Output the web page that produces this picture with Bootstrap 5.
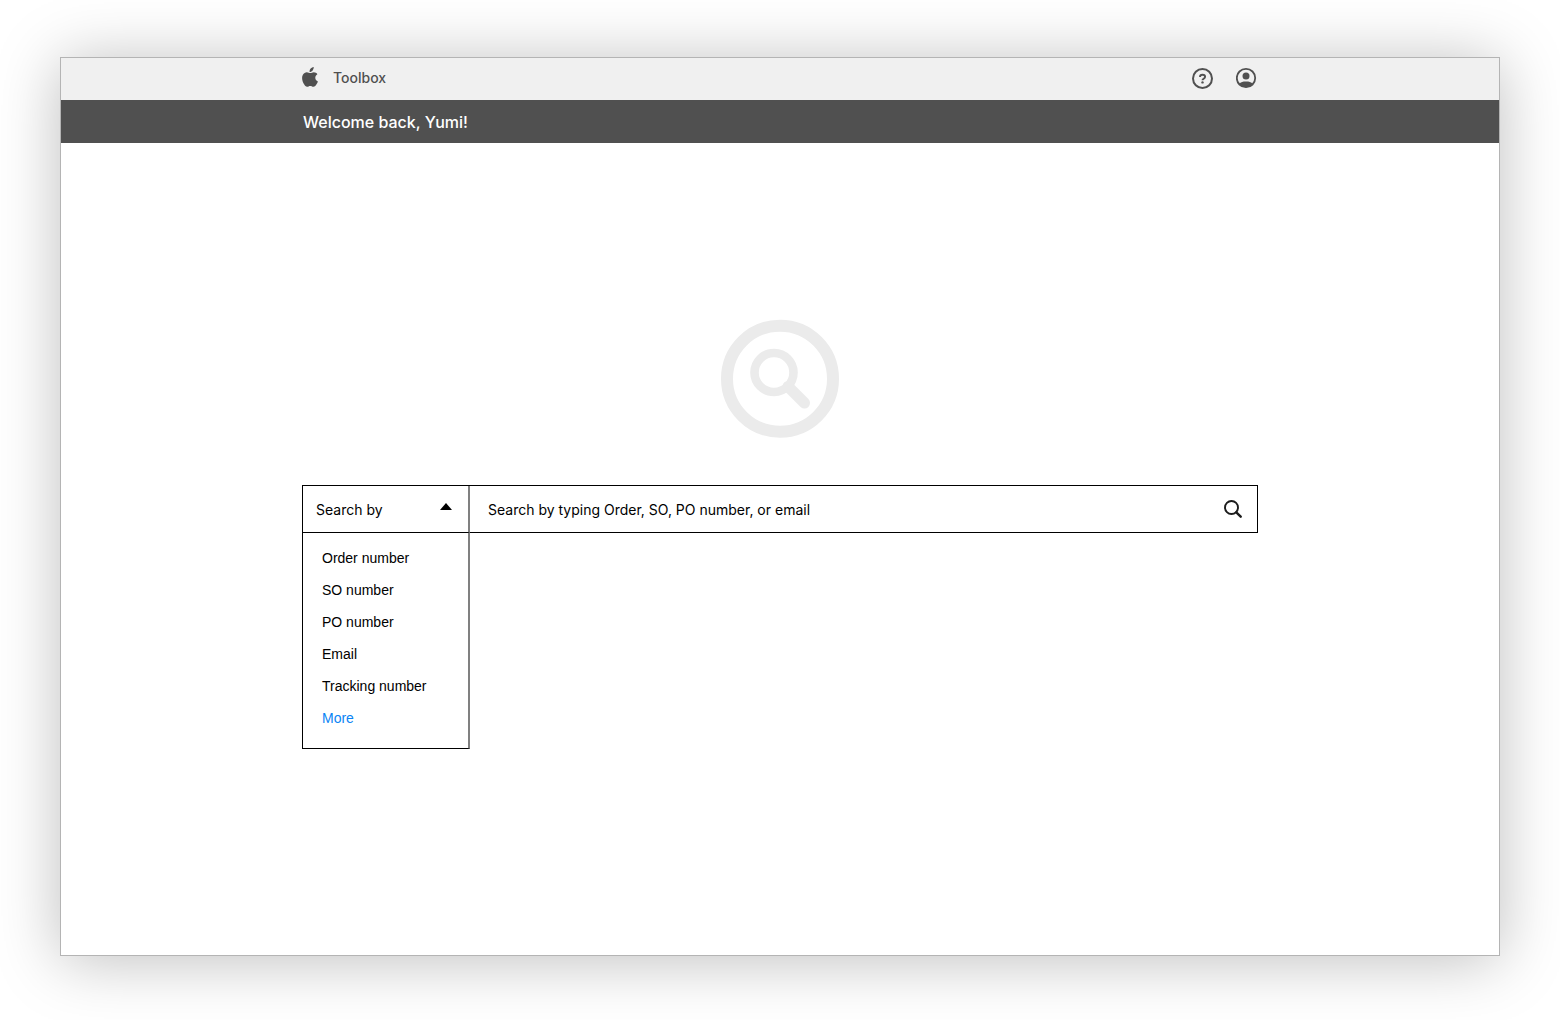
<!DOCTYPE html>
<html lang="en">
<head>
<meta charset="utf-8">
<meta name="viewport" content="width=device-width, initial-scale=1">
<title>Toolbox</title>
<link href="https://cdn.jsdelivr.net/npm/bootstrap@5.3.0/dist/css/bootstrap.min.css" rel="stylesheet">
<style>
  body { font-family: Inter, "Liberation Sans", sans-serif; background: #fff; color: #000; padding: 57px 60px 64px; }
  .app-window { min-height: calc(100vh - 121px); border: 1px solid #b4b4b4; background: #fff; box-shadow: 0 4px 60px rgba(0,0,0,.26); }
  .content-width { width: 100%; max-width: 956px; margin: 0 auto; }
  .top-bar { background: #f0f0f0; color: #505050; height: 42px; padding-bottom: 2px; }
  .top-bar .navbar-brand { color: #505050; font-size: 14px; font-weight: 500; line-height: 20px; gap: 15px; }
  .top-bar .navbar-brand svg { margin-bottom: 2px; }
  .icon-button { color: #505050; line-height: 0; }
  .welcome-bar { background: #505050; color: #fff; height: 43px; }
  .welcome-bar h1 { font-size: 16px; line-height: 24px; font-weight: 500; padding-left: 1px; }
  .search-page { padding-top: 176px; }
  .search-art { margin-bottom: 46px; }
  .search-bar { height: 48px; border: 1px solid #000; }
  .search-type { width: 167px; border-right: 2px solid #808080; }
  .search-type > .btn { font-size: 14px; color: #000; padding: 0 16px 0 13px; }
  .search-type > .btn:hover, .search-type > .btn.show { color: #000; border-color: transparent; }
  .search-type .dropdown-menu { --bs-dropdown-font-size: 14px; --bs-dropdown-color: #000; top: 100%; left: -1px; width: 168px; min-width: 0; margin: 0; padding: 9px 0 14px; border: 1px solid #000; border-right: 2px solid #808080; border-radius: 0; font-family: "Liberation Sans", Arial, sans-serif; }
  .search-type .dropdown-item { color: #000; line-height: 20px; padding: 6px 19px; }
  .search-type .more-item { color: #0a84f5; }
  .search-bar .form-control { font-size: 14px; color: #000; padding: 0 18px; }
  .search-bar .form-control::placeholder { color: #000; opacity: 1; }
  .search-submit { padding: 0 15px 0 13px; color: #1c1c1c; line-height: 0; }
</style>
<script src="https://cdn.jsdelivr.net/npm/bootstrap@5.3.0/dist/js/bootstrap.bundle.min.js" defer></script>
</head>
<body>
<div class="app-window">
  <header class="top-bar d-flex">
    <nav class="content-width d-flex align-items-center justify-content-between" aria-label="Main">
      <a class="navbar-brand d-flex align-items-center m-0 p-0" href="#">
        <svg width="16" height="21" viewBox="0 0 16 21" fill="currentColor" aria-hidden="true"><path d="M11.700 0c.2 1.300-.3 2.500-1.100 3.400C9.800 4.400 8.700 5 7.600 4.900 7.400 3.600 8 2.400 8.700 1.600 9.500.7 10.700.1 11.700 0ZM15.400 7.200c-1.300.8-2.100 2-2.100 3.500 0 1.700 1 3.100 2.600 3.700-.3 1-.8 2-1.400 2.900-.8 1.200-1.700 2.500-3 2.500-1.300 0-1.700-.8-3.200-.8s-1.900.8-3.200.8c-1.300 0-2.200-1.300-3-2.500C.5 14.900-.8 10.600.9 7.700c.9-1.500 2.400-2.400 4-2.400 1.400 0 2.300.8 3.500.8 1.100 0 1.800-.8 3.500-.8 1.400 0 2.700.7 3.500 1.900Z"/></svg>
        <span>Toolbox</span>
      </a>
      <div class="d-flex align-items-center">
        <button type="button" class="btn icon-button border-0 p-0 me-4" aria-label="Help">
          <svg width="20" height="22" viewBox="0 0 20 22" fill="none" stroke="currentColor" stroke-width="2" overflow="visible"><circle cx="10.500" cy="11.500" r="9.500"/><path d="M8 10c0-1.500 1-2.300 2.500-2.300s2.600.8 2.600 2.100c0 1-.6 1.400-1.400 1.900-.8.5-1.200.8-1.200 1.600" stroke-width="1.900"/><circle cx="10.500" cy="15.400" r="1.200" fill="currentColor" stroke="none"/></svg>
        </button>
        <button type="button" class="btn icon-button border-0 p-0" aria-label="Account">
          <svg width="22" height="22" viewBox="0 0 22 22"><circle cx="10" cy="11" r="9.200" fill="none" stroke="currentColor" stroke-width="1.800"/><circle cx="10" cy="9" r="3.500" fill="currentColor"/><path d="M3.200 16.500c1.600-1.500 3.800-2.100 6.800-2.100s5.200.6 6.800 2.100C15 19 12.500 20.300 10 20.300S5 19 3.200 16.500Z" fill="currentColor"/></svg>
        </button>
      </div>
    </nav>
  </header>
  <div class="welcome-bar d-flex align-items-center">
    <div class="content-width"><h1 class="m-0">Welcome back, Yumi!</h1></div>
  </div>
  <main class="search-page">
    <div class="content-width">
      <div class="search-art text-center">
        <svg class="d-block mx-auto" width="120" height="120" viewBox="0 0 120 120" fill="none" stroke="#ebebeb" aria-hidden="true"><circle cx="60" cy="59.700" r="53" stroke-width="12"/><circle cx="54" cy="53.500" r="19.500" stroke-width="8.600"/><path d="M68 67.500 84.500 84" stroke-width="11" stroke-linecap="round"/></svg>
      </div>
      <form class="search-bar d-flex" role="search">
        <div class="search-type dropdown flex-shrink-0">
          <button type="button" class="btn show w-100 h-100 border-0 rounded-0 d-flex align-items-center justify-content-between" data-bs-toggle="dropdown" data-bs-display="static" aria-expanded="true">
            <span>Search by</span>
            <svg class="mb-1" width="12" height="8" viewBox="0 0 12 8" aria-hidden="true"><path d="M0 7 6 0l6 7Z"/></svg>
          </button>
          <ul class="dropdown-menu show">
            <li><a class="dropdown-item" href="#">Order number</a></li>
            <li><a class="dropdown-item" href="#">SO number</a></li>
            <li><a class="dropdown-item" href="#">PO number</a></li>
            <li><a class="dropdown-item" href="#">Email</a></li>
            <li><a class="dropdown-item" href="#">Tracking number</a></li>
            <li><a class="dropdown-item more-item" href="#">More</a></li>
          </ul>
        </div>
        <input type="search" class="form-control border-0 rounded-0 bg-transparent shadow-none" placeholder="Search by typing Order, SO, PO number, or email" aria-label="Search by typing Order, SO, PO number, or email">
        <button type="submit" class="btn search-submit border-0" aria-label="Search">
          <svg width="18" height="18" viewBox="0 0 18 18" fill="none" stroke="currentColor"><circle cx="7.500" cy="7.500" r="6.500" stroke-width="1.900"/><path d="m12.300 12.300 4.400 4.400" stroke-width="2.400" stroke-linecap="round"/></svg>
        </button>
      </form>
    </div>
  </main>
</div>
</body>
</html>
